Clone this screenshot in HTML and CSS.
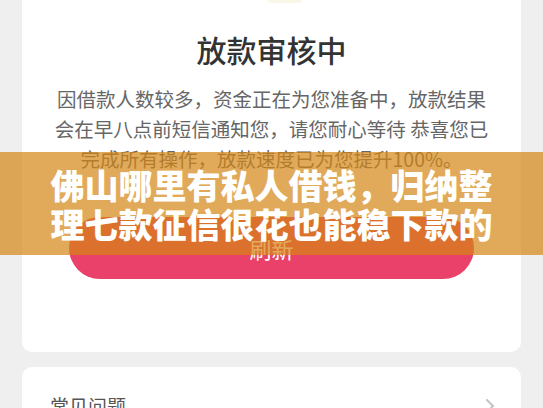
FILE: index.html
```html
<!DOCTYPE html>
<html lang="zh-CN">
<head>
<meta charset="utf-8">
<title>放款审核中</title>
<link rel="stylesheet" href="styles.css">
</head>
<body>
<div class="page">
  <section class="card status">
    <div class="status-icon"></div>
    <h1 class="title">放款审核中</h1>
    <p class="desc">因借款人数较多，资金正在为您准备中，放款结果<br>会在早八点前短信通知您，请您耐心等待 恭喜您已<br>完成所有操作，放款速度已为您提升100%。</p>
    <button class="refresh">刷新</button>
  </section>
  <section class="card faq">
    <span class="faq-label">常见问题</span>
    <svg class="chevron" width="10" height="16" viewBox="0 0 10 16"><path d="M2 2 L8 8 L2 14" fill="none" stroke="#c4c4c4" stroke-width="2" stroke-linecap="round"/></svg>
  </section>
</div>
<div class="banner">
  <p class="banner-text">佛山哪里有私人借钱，归纳整<br>理七款征信很花也能稳下款的</p>
</div>
</body>
</html>
```

FILE: styles.css
```css
html, body {
  margin: 0;
  padding: 0;
}
body {
  background: #efefef;
  font-family: "Noto Sans CJK SC", "Noto Sans", sans-serif;
  width: 543px;
  height: 408px;
  overflow: hidden;
  position: relative;
}
.page {
  padding: 0 22px;
}
.card {
  background: #fff;
  border-radius: 10px;
}
.status {
  border-radius: 0 0 10px 10px;
  display: flex;
  flex-direction: column;
  align-items: center;
  padding-bottom: 73px;
}
.status-icon {
  width: 34px;
  height: 3px;
  margin-left: 26px;
  background: #faf7e8;
  border-radius: 0 0 17px 17px;
}
.title {
  margin: 26px 0 0;
  font-size: 30px;
  line-height: 40px;
  font-weight: 500;
  color: #333;
}
.desc {
  margin: 15px 0 0;
  font-size: 19.5px;
  line-height: 30px;
  color: #666;
  text-align: center;
  white-space: nowrap;
}
.refresh {
  margin-top: 43px;
  width: 405px;
  height: 62px;
  border: none;
  border-radius: 31px;
  background: #ea416a;
  color: #fff;
  font-family: inherit;
  font-size: 22px;
}
.faq {
  margin-top: 15px;
  padding: 26px 26px 30px 28px;
  display: flex;
  justify-content: space-between;
  align-items: center;
}
.faq-label {
  font-size: 19px;
  line-height: 26px;
  color: #555;
}
.chevron {
  display: block;
}
.banner {
  position: absolute;
  left: 0;
  top: 152px;
  width: 543px;
  height: 103px;
  background: rgba(212, 134, 20, 0.7);
  display: flex;
  align-items: center;
  justify-content: center;
}
.banner-text {
  margin: 0;
  color: #fff;
  font-size: 34px;
  line-height: 39px;
  font-weight: 900;
  text-align: center;
  white-space: nowrap;
}
```
